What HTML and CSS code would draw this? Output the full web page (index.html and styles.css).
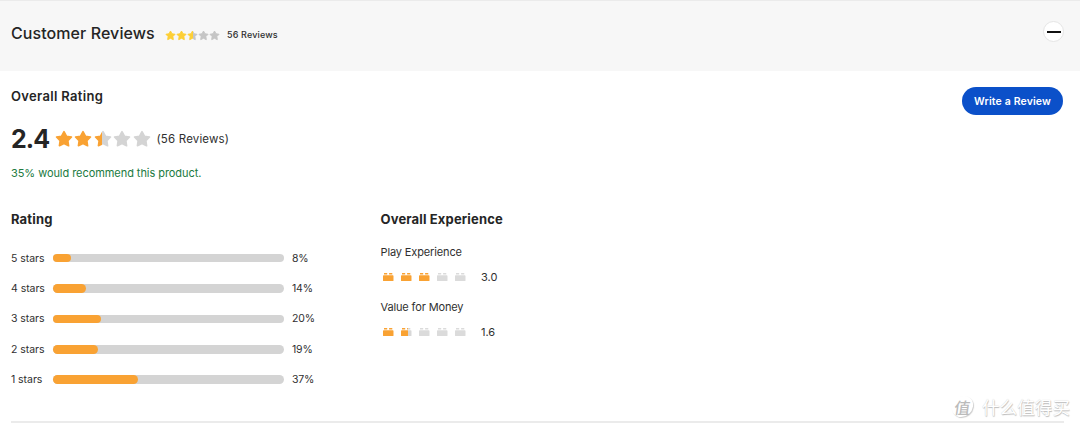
FILE: index.html
```html
<!DOCTYPE html>
<html lang="en">
<head>
    <meta charset="UTF-8">
    <meta name="viewport" content="width=device-width, initial-scale=1.0">
    <title>Customer Reviews</title>
    <link rel="stylesheet" href="styles.css">
</head>
<body>

    <!-- shared shapes -->
    <svg class="defs" width="0" height="0">
        <defs>
            <path id="star" stroke-width="1.8" stroke-linejoin="round" d="M10 1.8 L12.7 6.9 L18.3 7.8 L14.3 11.9 L15.1 17.5 L10 15 L4.9 17.5 L5.7 11.9 L1.7 7.8 L7.3 6.9 Z"/>
            <path id="brick" d="M1 0h3.2v1.6H1zM6.1 0h3.2v1.6H6.1zM0.7 2.2h9.1q.7 0 .7.7v4.6q0 .7-.7.7H.7q-.7 0-.7-.7V2.9q0-.7.7-.7z"/>
            <linearGradient id="halfYellow">
                <stop offset="50%" stop-color="#fdcf36"/>
                <stop offset="50%" stop-color="#c5c5c5"/>
            </linearGradient>
            <linearGradient id="halfOrange">
                <stop offset="42%" stop-color="#f9a233"/>
                <stop offset="42%" stop-color="#d4d4d4"/>
            </linearGradient>
            <linearGradient id="halfBrick">
                <stop offset="64%" stop-color="#f9a233"/>
                <stop offset="64%" stop-color="#d8d8d8"/>
            </linearGradient>
        </defs>
    </svg>

    <div class="header">
        <h1>Customer Reviews</h1>
        <div class="small-stars">
            <svg class="yellow" viewBox="0 0 20 20"><use href="#star"/></svg>
            <svg class="yellow" viewBox="0 0 20 20"><use href="#star"/></svg>
            <svg class="half-yellow" viewBox="0 0 20 20"><use href="#star"/></svg>
            <svg class="dark-grey" viewBox="0 0 20 20"><use href="#star"/></svg>
            <svg class="dark-grey" viewBox="0 0 20 20"><use href="#star"/></svg>
        </div>
        <span class="small-count">56 Reviews</span>
        <button class="toggle" aria-label="Collapse"></button>
    </div>

    <div class="content">
        <div class="summary">
            <div>
                <h2 class="overall">Overall Rating</h2>
                <div class="score">
                    <span class="score-number">2.4</span>
                    <div class="big-stars">
                        <svg class="orange" viewBox="0 0 20 20"><use href="#star"/></svg>
                        <svg class="orange" viewBox="0 0 20 20"><use href="#star"/></svg>
                        <svg class="half-orange" viewBox="0 0 20 20"><use href="#star"/></svg>
                        <svg class="grey" viewBox="0 0 20 20"><use href="#star"/></svg>
                        <svg class="grey" viewBox="0 0 20 20"><use href="#star"/></svg>
                    </div>
                    <span class="count">(56 Reviews)</span>
                </div>
                <p class="recommend">35% would recommend this product.</p>
            </div>
            <button class="write">Write a Review</button>
        </div>

        <div class="columns">
            <div class="ratings">
                <h2 class="rating-title">Rating</h2>
                <div class="row">
                    <span class="label">5 stars</span>
                    <div class="bar"><div class="fill" style="width: 8%"></div></div>
                    <span class="percent">8%</span>
                </div>
                <div class="row">
                    <span class="label">4 stars</span>
                    <div class="bar"><div class="fill" style="width: 14.4%"></div></div>
                    <span class="percent">14%</span>
                </div>
                <div class="row">
                    <span class="label">3 stars</span>
                    <div class="bar"><div class="fill" style="width: 20.8%"></div></div>
                    <span class="percent">20%</span>
                </div>
                <div class="row">
                    <span class="label">2 stars</span>
                    <div class="bar"><div class="fill" style="width: 19.4%"></div></div>
                    <span class="percent">19%</span>
                </div>
                <div class="row">
                    <span class="label">1 stars</span>
                    <div class="bar"><div class="fill" style="width: 37%"></div></div>
                    <span class="percent">37%</span>
                </div>
            </div>

            <div class="experience">
                <h2 class="experience-title">Overall Experience</h2>
                <p class="item play">Play Experience</p>
                <div class="bricks">
                    <svg class="orange" viewBox="0 0 10.5 8.2"><use href="#brick"/></svg>
                    <svg class="orange" viewBox="0 0 10.5 8.2"><use href="#brick"/></svg>
                    <svg class="orange" viewBox="0 0 10.5 8.2"><use href="#brick"/></svg>
                    <svg class="light-grey" viewBox="0 0 10.5 8.2"><use href="#brick"/></svg>
                    <svg class="light-grey" viewBox="0 0 10.5 8.2"><use href="#brick"/></svg>
                    <span class="value">3.0</span>
                </div>
                <p class="item money">Value for Money</p>
                <div class="bricks">
                    <svg class="orange" viewBox="0 0 10.5 8.2"><use href="#brick"/></svg>
                    <svg class="half-brick" viewBox="0 0 10.5 8.2"><use href="#brick"/></svg>
                    <svg class="light-grey" viewBox="0 0 10.5 8.2"><use href="#brick"/></svg>
                    <svg class="light-grey" viewBox="0 0 10.5 8.2"><use href="#brick"/></svg>
                    <svg class="light-grey" viewBox="0 0 10.5 8.2"><use href="#brick"/></svg>
                    <span class="value">1.6</span>
                </div>
            </div>
        </div>
    </div>

    <div class="watermark">
        <span class="mark">值</span>
        <span>什么值得买</span>
    </div>

</body>
</html>
```
FILE: styles.css
```css
body {
    font-family: Inter, "Noto Sans", sans-serif;
    background-color: #fff;
    color: #303030;
    margin: 0;
    height: 430px;
    position: relative;
    overflow: hidden;
}
h1, h2, p {
    margin: 0;
    white-space: nowrap;
}
button {
    font-family: inherit;
    padding: 0;
}
svg {
    display: block;
    flex: none;
}
.defs {
    position: absolute;
}
.header {
    display: flex;
    align-items: flex-start;
    box-sizing: border-box;
    height: 71px;
    padding: 0 16px 0 11px;
    background-color: #f7f7f7;
    border-top: 1px solid #ebebeb;
}
h1 {
    width: 154px;
    margin-top: 22px;
    font-size: 16px;
    line-height: 20px;
    font-weight: 500;
    letter-spacing: 0.08px;
    color: #252525;
}
.small-stars {
    display: flex;
    gap: 0.1px;
    width: 62px;
    margin-top: 29px;
}
.small-stars svg {
    width: 11px;
    height: 11px;
}
.small-count {
    margin-top: 28px;
    font-size: 9px;
    line-height: 12px;
    font-weight: 500;
    letter-spacing: 0.15px;
    white-space: nowrap;
}
.toggle {
    display: flex;
    align-items: center;
    justify-content: center;
    box-sizing: border-box;
    width: 21px;
    height: 21px;
    margin: 20px 0 0 auto;
    border: 1px solid #e5e5e5;
    border-radius: 50%;
    background-color: #fff;
}
.toggle::before {
    content: "";
    width: 14px;
    height: 2px;
    background-color: #111;
}
.content {
    box-sizing: border-box;
    height: 352px;
    margin: 0 16px 0 11px;
    border-bottom: 2px solid #ebebeb;
}
.summary {
    display: flex;
    justify-content: space-between;
    height: 138px;
}
h2 {
    font-size: 13px;
    line-height: 18px;
    font-weight: 700;
    letter-spacing: 0.15px;
    color: #252525;
}
.overall {
    margin-top: 16px;
    font-weight: 600;
    letter-spacing: 0.33px;
}
.score {
    display: flex;
    align-items: center;
    height: 30px;
    margin-top: 18.5px;
}
.score-number {
    width: 44px;
    font-size: 25px;
    line-height: 30px;
    font-weight: 700;
    letter-spacing: -0.9px;
    color: #252525;
}
.big-stars {
    display: flex;
    gap: 1.4px;
    width: 101.5px;
}
.big-stars svg {
    width: 18px;
    height: 18px;
}
.count {
    font-size: 11.5px;
    line-height: 16px;
    letter-spacing: 0.17px;
}
.recommend {
    margin-top: 11.5px;
    font-size: 11px;
    line-height: 16px;
    letter-spacing: -0.06px;
    color: #207a41;
}
.write {
    width: 101px;
    height: 28px;
    margin: 16px 1px 0 0;
    border: none;
    border-radius: 14px;
    background-color: #0b50c9;
    color: #fff;
    font-size: 10.5px;
    font-weight: 600;
    letter-spacing: 0.14px;
    white-space: nowrap;
}
.columns {
    display: flex;
}
.ratings {
    width: 369.5px;
}
.rating-title {
    margin: 1px 0 14.8px;
}
.row {
    display: flex;
    align-items: center;
    height: 30.45px;
    font-size: 10.5px;
}
.label {
    width: 42px;
    letter-spacing: -0.05px;
    white-space: nowrap;
}
.percent {
    letter-spacing: -0.2px;
}
.bar {
    width: 231px;
    height: 8.6px;
    margin-right: 8px;
    border-radius: 5px;
    background-color: #d4d4d4;
}
.fill {
    height: 100%;
    border-radius: 5px;
    background-color: #f9a233;
}
.experience-title {
    margin-top: 1px;
}
.item {
    font-size: 11px;
    line-height: 16px;
    letter-spacing: -0.13px;
}
.play {
    margin-top: 16px;
}
.money {
    margin-top: 14.4px;
}
.bricks {
    display: flex;
    align-items: center;
    gap: 7.5px;
    height: 16px;
    margin-top: 9px;
    padding-left: 2.5px;
}
.bricks svg {
    width: 10.5px;
    height: 8.2px;
}
.value {
    margin-left: 8px;
    font-size: 11px;
}
.yellow { fill: #fdcf36; stroke: #fdcf36; }
.half-yellow { fill: url(#halfYellow); stroke: url(#halfYellow); }
.dark-grey { fill: #c5c5c5; stroke: #c5c5c5; }
.orange { fill: #f9a233; stroke: #f9a233; }
.half-orange { fill: url(#halfOrange); stroke: url(#halfOrange); }
.grey { fill: #d4d4d4; stroke: #d4d4d4; }
.light-grey { fill: #dbdbdb; }
.half-brick { fill: url(#halfBrick); }
.bricks svg { stroke: none; }
/* sits over the bottom rule */
.watermark {
    position: absolute;
    top: 394px;
    right: 10px;
    display: flex;
    align-items: center;
    gap: 9px;
    height: 24px;
    font-family: "Noto Sans CJK SC", sans-serif;
    font-size: 17.6px;
    color: #fff;
    text-shadow: 0.5px 0.5px 1px #bbb, 0 0 1px #ccc;
    white-space: nowrap;
}
.mark {
    display: flex;
    align-items: center;
    justify-content: center;
    width: 21px;
    height: 21px;
    border-radius: 50%;
    background-color: #fff;
    box-shadow: 1px 1px 1px #ccc;
    font-size: 16px;
    font-weight: 500;
    color: #bbb;
    text-shadow: none;
    transform: skewX(-8deg);
}
```
